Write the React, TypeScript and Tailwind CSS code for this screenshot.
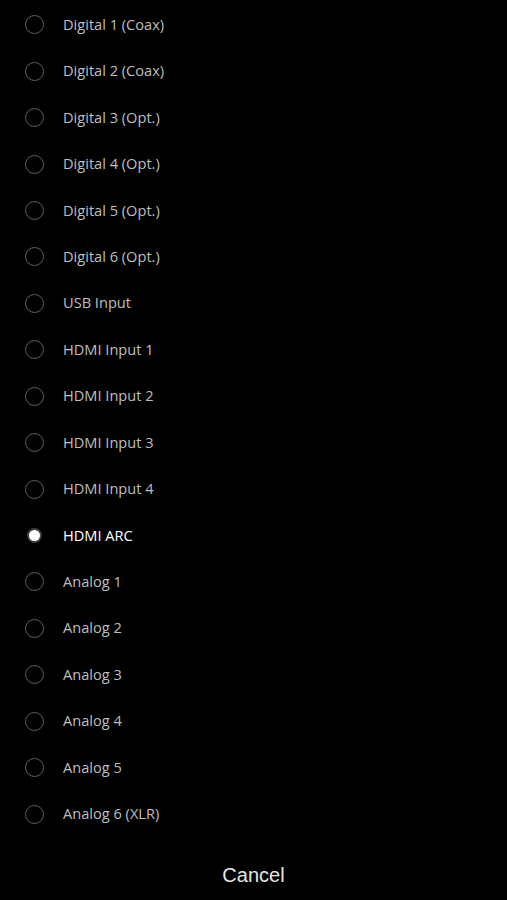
import React from "react";

const inputs = [
  "Digital 1 (Coax)",
  "Digital 2 (Coax)",
  "Digital 3 (Opt.)",
  "Digital 4 (Opt.)",
  "Digital 5 (Opt.)",
  "Digital 6 (Opt.)",
  "USB Input",
  "HDMI Input 1",
  "HDMI Input 2",
  "HDMI Input 3",
  "HDMI Input 4",
  "HDMI ARC",
  "Analog 1",
  "Analog 2",
  "Analog 3",
  "Analog 4",
  "Analog 5",
  "Analog 6 (XLR)",
];

export default function App() {
  const selected = "HDMI ARC";

  return (
    <div className="w-[507px] h-[900px] bg-black flex flex-col overflow-hidden">
      {/* INPUT LIST */}
      <ul className="flex flex-col pt-[1.5px]">
        {inputs.map((name) => {
          const active = name === selected;
          return (
            <li key={name} className="h-[46.45px] flex items-center pl-[25px]">
              {active ? (
                <span className="w-[19px] h-[19px] rounded-full flex items-center justify-center">
                  <span className="w-[11px] h-[11px] rounded-full bg-white shadow-[0_0_0_2px_rgba(255,255,255,0.25)]" />
                </span>
              ) : (
                <span className="w-[19px] h-[19px] rounded-full border-[1.5px] border-[#5e5e5e]" />
              )}
              <span
                className={`ml-[19px] text-[14.6px] font-['Open_Sans',sans-serif] ${
                  active ? "text-white" : "text-[#bebebe]"
                }`}
              >
                {name}
              </span>
            </li>
          );
        })}
      </ul>

      {/* CANCEL */}
      <div className="flex-1 flex items-center justify-center pt-[12px]">
        <span className="text-[20px] text-[#e6e6e6] font-['Liberation_Sans',Arial,sans-serif]">
          Cancel
        </span>
      </div>
    </div>
  );
}
